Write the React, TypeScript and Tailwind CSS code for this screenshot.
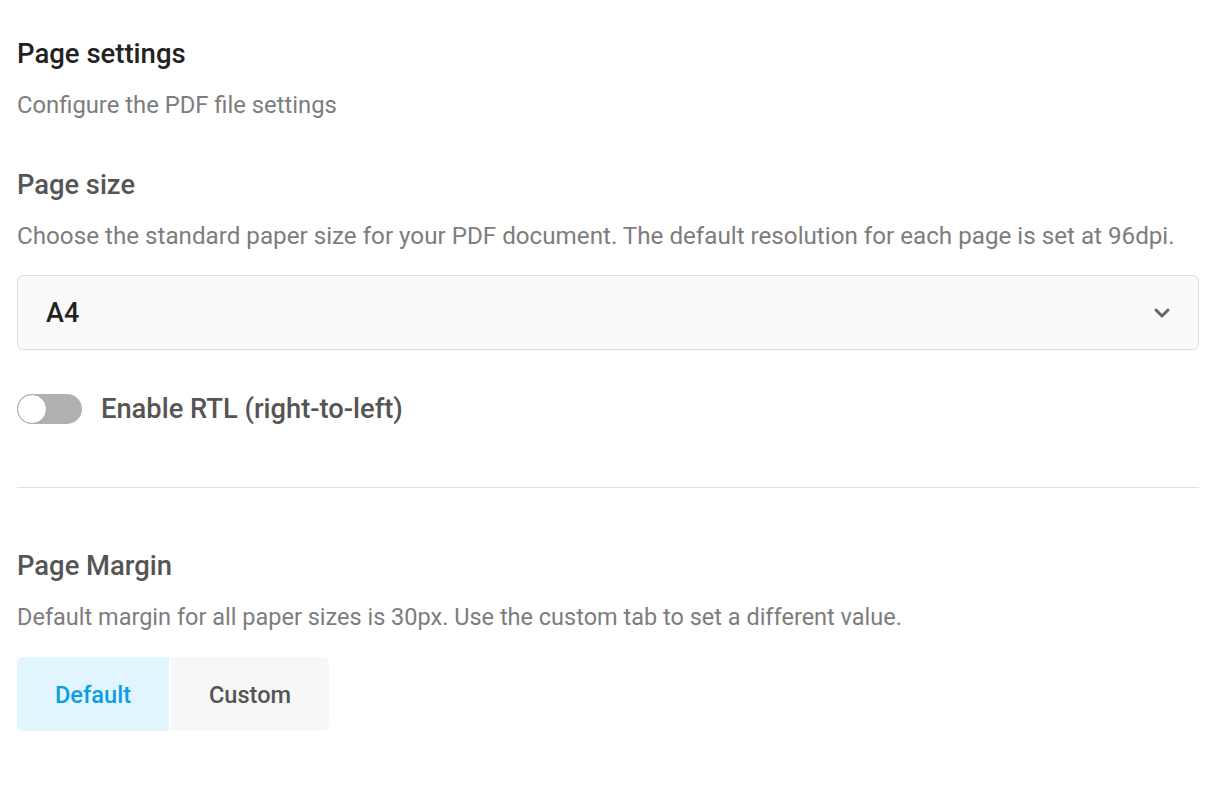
import React, { useState } from "react";

export default function App() {
  const [rtl, setRtl] = useState(false);
  const [tab, setTab] = useState<"default" | "custom">("default");
  return (
    <div className="min-h-[802px] w-full bg-white" style={{ fontFamily: "Roboto, 'Noto Sans', sans-serif" }}>
      <div className="ml-[17px] w-[1182px] pt-[38px]">
        <h1 className="text-[27.5px] leading-[32px] font-medium text-[#222222]">Page settings</h1>
        <p className="mt-[21px] text-[23.8px] leading-[28px] text-[#7d7d7d]">Configure the PDF file settings</p>

        <h2 className="mt-[50px] text-[27.3px] leading-[32px] font-medium text-[#555555]">Page size</h2>
        <p className="mt-[21px] text-[24.2px] leading-[28px] text-[#7d7d7d]">
          Choose the standard paper size for your PDF document. The default resolution for each page is set at 96dpi.
        </p>

        <div className="mt-[25px] flex h-[75px] items-center justify-between rounded-[6px] border border-[#dddddd] bg-[#fafafa] pl-[28px] pr-[26px]">
          <span className="pt-[2px] text-[27px] font-medium text-[#222222]">A4</span>
          <svg width="20" height="20" viewBox="0 0 20 20" fill="none">
            <path d="M4 7l6 6 6-6" stroke="#666666" strokeWidth="3" strokeLinecap="round" strokeLinejoin="round" />
          </svg>
        </div>

        <div className="mt-[43px] flex items-center gap-[19px]">
          <button
            onClick={() => setRtl(!rtl)}
            className={`relative h-[30px] w-[65px] rounded-full ${rtl ? "bg-[#039be5]" : "bg-[#b0b0b0]"}`}
          >
            <span
              className={`absolute top-0 h-[30px] w-[30px] rounded-full border-[1.5px] border-[#a8a8a8] bg-white ${rtl ? "left-[35px]" : "left-0"}`}
            />
          </button>
          <span className="text-[27.3px] leading-[32px] font-medium text-[#555555]">Enable RTL (right-to-left)</span>
        </div>

        <div className="mt-[62px] h-px bg-[#e0e0e0]" />

        <h2 className="mt-[62px] text-[27.4px] leading-[32px] font-medium text-[#555555]">Page Margin</h2>
        <p className="mt-[21px] text-[23.5px] leading-[28px] text-[#7d7d7d]">
          Default margin for all paper sizes is 30px. Use the custom tab to set a different value.
        </p>

        <div className="mt-[26px] flex h-[74px] w-[312px] gap-[2px] overflow-hidden rounded-[6px]">
          <button
            onClick={() => setTab("default")}
            className={`flex w-[152px] items-center justify-center pt-[4px] text-[23.6px] font-medium ${tab === "default" ? "bg-[#e1f5fe] text-[#0b9ee0]" : "bg-[#f7f7f7] text-[#555555]"}`}
          >
            Default
          </button>
          <button
            onClick={() => setTab("custom")}
            className={`flex w-[158px] items-center justify-center pt-[4px] text-[23.6px] font-medium ${tab === "custom" ? "bg-[#e1f5fe] text-[#0b9ee0]" : "bg-[#f7f7f7] text-[#555555]"}`}
          >
            Custom
          </button>
        </div>
      </div>
    </div>
  );
}
